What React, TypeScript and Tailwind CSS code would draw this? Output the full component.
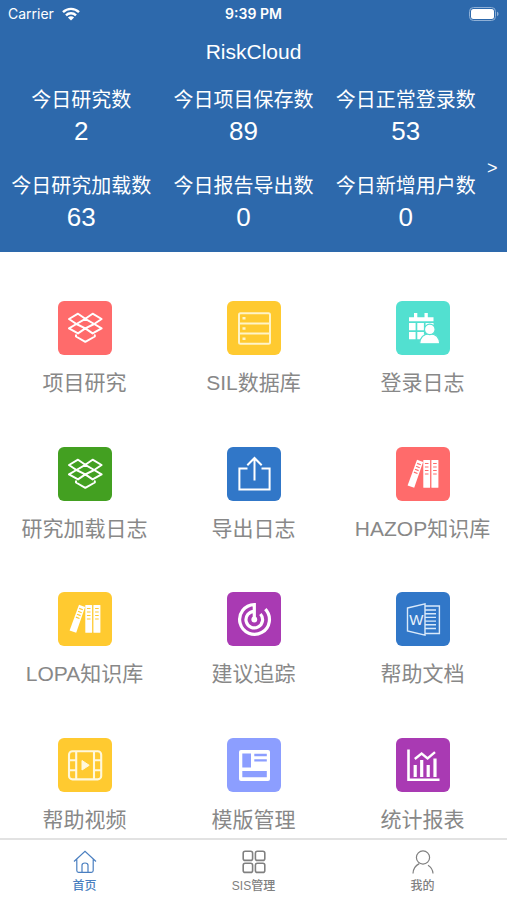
import type { ReactNode } from "react";

const stats = [
  { label: "今日研究数", value: 2 },
  { label: "今日项目保存数", value: 89 },
  { label: "今日正常登录数", value: 53 },
  { label: "今日研究加载数", value: 63 },
  { label: "今日报告导出数", value: 0 },
  { label: "今日新增用户数", value: 0 },
];

function BoxIcon() {
  return (
    <g stroke="#fff" strokeWidth="2" strokeLinejoin="round" strokeLinecap="round" fill="none">
      <path d="M11 18 20 12.7 27.3 17.8 18.4 23ZM43.6 18 34.6 12.7 27.3 17.8 36.2 23Z" />
      <path d="M18.4 23 11 27.4 20 32.4 27.3 27.4ZM36.2 23 43.6 27.4 34.6 32.4 27.3 27.4Z" />
      <path d="M18 34.3V35.5L27.3 40.8 36.8 35.5V34.3" />
    </g>
  );
}

function DatabaseIcon() {
  return (
    <g stroke="#fff4c8" strokeWidth="2" fill="none">
      <rect x="12" y="12.2" width="31" height="30.6" rx="1.5" />
      <path d="M12 22.4H43M12 32.6H43" />
      <path d="M15.5 17.3H18.5M15.5 27.5H18.5M15.5 37.7H18.5" strokeWidth="2.6" />
    </g>
  );
}

function CalendarUserIcon() {
  return (
    <g fill="#fff">
      <path d="M13 16.2H18V12H21.3V16.2H28.5V12H31.8V16.2H37.5V20.2H13Z" />
      <path d="M13 22H19.6V29.2H13ZM21.3 22H27.9V29.2H21.3ZM29.6 22H37.5V29.2H29.6ZM13 31H19.6V38.2H13ZM21.3 31H27.9V38.2H21.3Z" />
      <g stroke="#52e0d0" strokeWidth="1.2">
        <path d="M23.6 42.8C24 36 27.6 32.8 33.8 32.8S43.4 36 43.8 42.8Z" />
        <circle cx="33.8" cy="28.4" r="5.3" />
      </g>
    </g>
  );
}

function ExportIcon() {
  return (
    <g stroke="#fff" strokeWidth="2" fill="none">
      <path d="M20.5 21.5H12.4V42.6H42.6V21.5H34.5" />
      <path d="M27.5 33.5V11.5M20.3 18.2 27.5 11 34.7 18.2" />
    </g>
  );
}

function BooksIcon({ holes }: { holes: string }) {
  return (
    <g fill="#fff">
      <path d="M21 12.8 27.1 15 18.2 40.8 11.6 38.4Z" />
      <rect x="27.3" y="13" width="6.8" height="27.8" rx=".6" />
      <rect x="35.4" y="13" width="7" height="27.8" rx=".6" />
      <g stroke={holes} strokeWidth="1.2">
        <path d="M21.2 16.4 24.8 17.8M20.1 19.3 23.7 20.7M19 22.2 22.6 23.6M17.9 25.1 21.5 26.5" />
        <path d="M28.9 16.5H32.5M28.9 20H32.5M28.9 23.5H32.5M28.9 27H32.5" />
        <path d="M37.1 16.5H40.7M37.1 20H40.7M37.1 23.5H40.7M37.1 27H40.7" />
      </g>
    </g>
  );
}

function RadarIcon() {
  return (
    <g stroke="#fff" strokeWidth="3.2" fill="none">
      <path d="M27.3 27.5V12.6A14.9 14.9 0 1 0 38.3 17.2" />
      <path d="M27.3 19.3A8.3 8.3 0 1 0 33.4 22" />
      <circle cx="27.3" cy="27.5" r="2.9" fill="#fff" stroke="none" />
    </g>
  );
}

function WordIcon() {
  return (
    <g stroke="#d9e9fa" strokeWidth="1.4" fill="none">
      <path d="M11.5 16 29 11.8V43.2L11.5 39Z" />
      <path d="M29 14H43.4V41.5H29" />
      <path d="M29 18H40M29 21.7H40M29 25.4H40M29 29.1H40M29 32.8H40M29 36.5H40" />
      <text x="20.3" y="33" textAnchor="middle" fontSize="15" stroke="none" fill="#e8f2fc">
        W
      </text>
    </g>
  );
}

function VideoIcon() {
  return (
    <g stroke="#fff8dc" strokeWidth="2.1" fill="none">
      <rect x="11" y="13.2" width="32.2" height="28.2" rx="3.5" />
      <path d="M18.2 13.2V41.4M36 13.2V41.4M11 22.2H18.2M11 32.2H18.2M36 22.2H43.2M36 32.2H43.2" />
      <path d="M24 22.5 31.2 27.3 24 32Z" fill="#fff8dc" strokeWidth="1" strokeLinejoin="round" />
    </g>
  );
}

function TemplateIcon() {
  return (
    <g>
      <rect x="12" y="12" width="31" height="31" rx="2" fill="#fff" />
      <path
        fill="#8c9eff"
        d="M15.3 15.5H24V29.5H15.3ZM27.3 15.8H39.8V18.2H27.3ZM27.3 21.2H39.8V23.6H27.3ZM15.3 33H39.8V39.3H15.3Z"
      />
    </g>
  );
}

function ChartIcon() {
  return (
    <g stroke="#fff" fill="none">
      <path d="M12.5 11.5V41.8H43.5" strokeWidth="2.6" />
      <path d="M19.2 27V39M25.7 22V39M32.2 27V39M39 20.5V39" strokeWidth="3.2" />
      <path d="M18.8 21 25.6 15.5 31.6 20.5 39 14.2" strokeWidth="2.4" />
    </g>
  );
}

const modules: { label: string; color: string; icon: ReactNode }[] = [
  { label: "项目研究", color: "bg-[#ff6b6b]", icon: <BoxIcon /> },
  { label: "SIL数据库", color: "bg-[#ffca30]", icon: <DatabaseIcon /> },
  { label: "登录日志", color: "bg-[#52e0d0]", icon: <CalendarUserIcon /> },
  { label: "研究加载日志", color: "bg-[#43a021]", icon: <BoxIcon /> },
  { label: "导出日志", color: "bg-[#3177c8]", icon: <ExportIcon /> },
  { label: "HAZOP知识库", color: "bg-[#ff6b6b]", icon: <BooksIcon holes="#ff6b6b" /> },
  { label: "LOPA知识库", color: "bg-[#ffca30]", icon: <BooksIcon holes="#ffca30" /> },
  { label: "建议追踪", color: "bg-[#a93ab3]", icon: <RadarIcon /> },
  { label: "帮助文档", color: "bg-[#3177c8]", icon: <WordIcon /> },
  { label: "帮助视频", color: "bg-[#ffca30]", icon: <VideoIcon /> },
  { label: "模版管理", color: "bg-[#8c9eff]", icon: <TemplateIcon /> },
  { label: "统计报表", color: "bg-[#a93ab3]", icon: <ChartIcon /> },
];

const tabs: { label: string; color: string; icon: ReactNode }[] = [
  {
    label: "首页",
    color: "text-[#4a7fc0]",
    icon: <path d="M1 11.5 12 1.2 23 11.5M3.8 9.5V20.5Q3.8 22.3 5.6 22.3H18.4Q20.2 22.3 20.2 20.5V9.5M9 22.3V15.2Q9 13 12 13T15 15.2V22.3" />,
  },
  {
    label: "SIS管理",
    color: "text-[#808080]",
    icon: (
      <g strokeWidth="1.6">
        <rect x="1.2" y="1.2" width="9.4" height="9.2" rx="2" />
        <rect x="13.4" y="1.2" width="9.4" height="9.2" rx="2" />
        <rect x="1.2" y="13.2" width="9.4" height="9.2" rx="2" />
        <rect x="13.4" y="13.2" width="9.4" height="9.2" rx="2" />
      </g>
    ),
  },
  {
    label: "我的",
    color: "text-[#808080]",
    icon: (
      <>
        <circle cx="12" cy="7.5" r="6.6" />
        <path d="M2 23.5C2.2 18.5 4.5 15.5 8.3 13.6M22 23.5C21.8 19.5 20 17 17 15.2" />
      </>
    ),
  },
];

function StatusBar() {
  return (
    <div className="grid h-7 grid-cols-3 items-center px-2 font-['Inter',sans-serif] text-sm">
      <div className="flex items-center gap-2">
        <span>Carrier</span>
        <svg viewBox="0 0 18 14" className="h-3.5 w-[18px]" fill="none" stroke="currentColor" strokeWidth="2.4">
          <path d="M1 5.2C5.5 .7 12.5 .7 17 5.2M4 8.4C6.8 5.6 11.2 5.6 14 8.4" />
          <path d="M9 13.6 5.9 10.4C7.6 8.8 10.4 8.8 12.1 10.4Z" fill="currentColor" stroke="none" />
        </svg>
      </div>
      <span className="text-center font-semibold">9:39 PM</span>
      <svg viewBox="0 0 30 14" className="h-3.5 w-[30px] justify-self-end">
        <rect x=".5" y=".5" width="26" height="13" rx="4" fill="none" stroke="#8fb0d6" />
        <rect x="2" y="2" width="23" height="10" rx="2.5" fill="#fff" />
        <path d="M28 4.8C30 5.4 30 8.6 28 9.2Z" fill="#8fb0d6" />
      </svg>
    </div>
  );
}

export default function App() {
  return (
    <div className="flex min-h-screen flex-col bg-white font-['Liberation_Sans','Noto_Sans_CJK_SC',sans-serif]">
      <header className="bg-[#2d69ac] text-white">
        <StatusBar />
        <h1 className="pt-2 text-center text-[21px] leading-8">RiskCloud</h1>
        {/* Today's figures */}
        <div className="flex items-center pt-4 pb-5">
          <dl className="grid flex-1 grid-cols-3 gap-y-6">
            {stats.map((s) => (
              <div key={s.label} className="text-center whitespace-nowrap">
                <dt className="text-[20px] leading-8">{s.label}</dt>
                <dd className="text-[26px] leading-[30px]">{s.value}</dd>
              </div>
            ))}
          </dl>
          <button type="button" aria-label="更多" className="w-5 pt-5 text-left text-lg leading-5">
            &gt;
          </button>
        </div>
      </header>

      <main className="grid flex-1 grid-cols-3 pb-1">
        {modules.map((m) => (
          <a key={m.label} href="#" className="flex flex-col items-center pt-[49px] whitespace-nowrap text-[#888888]">
            <span className={`size-[54px] rounded-md ${m.color}`}>
              <svg viewBox="0 0 54 54" className="size-full">
                {m.icon}
              </svg>
            </span>
            <span className="mt-3.5 text-[21px] leading-7">{m.label}</span>
          </a>
        ))}
      </main>

      <nav className="sticky bottom-0 grid grid-cols-3 border-t-2 border-[#e2e2e2] bg-white pt-2.5 pb-1.5">
        {tabs.map((t) => (
          <a key={t.label} href="#" className={`flex flex-col items-center gap-1 ${t.color}`}>
            <svg viewBox="0 0 24 24" className="size-6" fill="none" stroke="currentColor" strokeWidth="1.2">
              {t.icon}
            </svg>
            <span className="text-xs font-medium">{t.label}</span>
          </a>
        ))}
      </nav>
    </div>
  );
}
